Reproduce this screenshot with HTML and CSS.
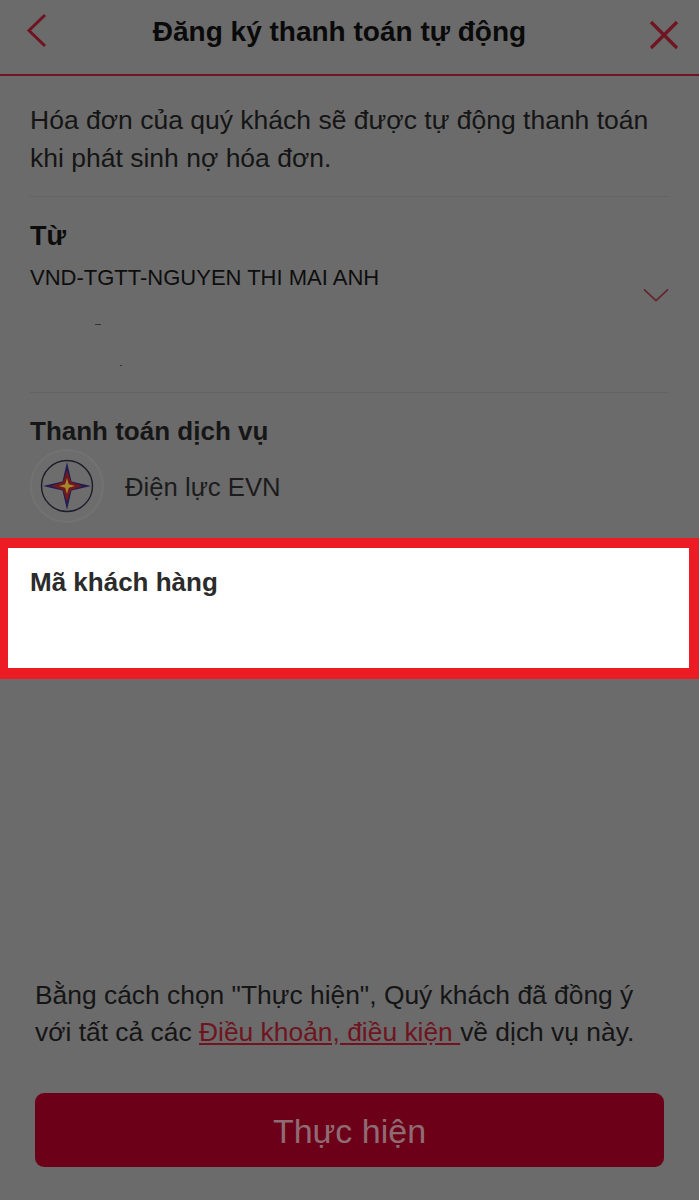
FILE: index.html
```html
<!DOCTYPE html>
<html lang="vi">
<head>
<meta charset="utf-8">
<title>Đăng ký thanh toán tự động</title>
<link rel="stylesheet" href="styles.css">
</head>
<body>
<div class="screen">
  <header class="topbar">
    <svg class="icon-back" viewBox="0 0 24 36" aria-hidden="true"><path d="M20 2 L4 17.5 L20 33"/></svg>
    <h1 class="title">Đăng ký thanh toán tự động</h1>
    <svg class="icon-close" viewBox="0 0 32 32" aria-hidden="true"><path d="M3 3 L29 29 M29 3 L3 29"/></svg>
  </header>
  <p class="intro">Hóa đơn của quý khách sẽ được tự động thanh toán khi phát sinh nợ hóa đơn.</p>
  <section class="from">
    <h2 class="label label-from">Từ</h2>
    <div class="account">VND-TGTT-NGUYEN THI MAI ANH</div>
    <svg class="icon-chevron" viewBox="0 0 28 16" aria-hidden="true"><path d="M1 1.5 L14 13.5 L27 1.5"/></svg>
    <span class="speck speck-a"></span>
    <span class="speck speck-b"></span>
  </section>
  <section class="service">
    <h2 class="label">Thanh toán dịch vụ</h2>
    <div class="provider">
      <span class="logo">
        <svg viewBox="0 0 54 54" aria-hidden="true">
          <circle cx="27" cy="27" r="25.5" fill="none" stroke="#1e1c28" stroke-width="1.4"/>
          <path d="M27 3 L31.5 22.5 L51 27 L31.5 31.5 L27 51 L22.5 31.5 L3 27 L22.5 22.5 Z" fill="#221c50"/>
          <path d="M27 11 L31 23 L43 27 L31 31 L27 43 L23 31 L11 27 L23 23 Z" fill="#701a20"/>
          <path d="M27 19 L28.8 25.2 L35 27 L28.8 28.8 L27 35 L25.2 28.8 L19 27 L25.2 25.2 Z" fill="#a8862a"/>
        </svg>
      </span>
      <span class="provider-name">Điện lực EVN</span>
    </div>
  </section>
  <section class="customer">
    <h2 class="label label-customer">Mã khách hàng</h2>
  </section>
  <footer class="bottom">
    <p class="terms">Bằng cách chọn "Thực hiện", Quý khách đã đồng ý với tất cả các <a class="terms-link" href="#">Điều khoản, điều kiện </a>về dịch vụ này.</p>
    <button class="submit" type="button">Thực hiện</button>
  </footer>
</div>
</body>
</html>
```

FILE: styles.css
```css
* { box-sizing: border-box; }
html, body { margin: 0; padding: 0; }
body { background: #6b6b6b; font-family: "Liberation Sans", Arial, sans-serif; color: #111; }
.screen { width: 699px; height: 1200px; display: flex; flex-direction: column; overflow: hidden; }
.topbar { height: 76px; flex: none; display: flex; align-items: center; justify-content: space-between; padding: 0 19px 12px 25px; border-bottom: 2px solid #6f1420; }
.title { margin: 2px 18px 0 0; font-size: 28px; font-weight: 700; color: #0a0a0a; }
.icon-back { width: 24px; height: 36px; fill: none; stroke: #6f1420; stroke-width: 3; }
.icon-close { width: 32px; height: 32px; fill: none; stroke: #6f1420; stroke-width: 3.2; margin-top: 8px; }
.intro { margin: 0 30px; padding: 25px 0 21px; font-size: 26.5px; line-height: 38px; color: #151515; border-bottom: 1px solid #636363; height: 121px; }
.from { position: relative; margin: 0 30px; height: 196px; padding-top: 21px; border-bottom: 1px solid #636363; }
.label { margin: 0; font-size: 26px; font-weight: 700; color: #161616; line-height: 36px; }
.label-from { font-size: 27px; color: #0c0c0c; }
.account { margin-top: 9px; font-size: 22px; line-height: 30px; color: #0e0e0e; }
.icon-chevron { position: absolute; right: 0; top: 91px; width: 26px; height: 15px; fill: none; stroke: #642530; stroke-width: 1.8; }
.speck { position: absolute; background: #333; height: 1px; }
.speck-a { left: 65px; top: 127px; width: 6px; }
.speck-b { left: 90px; top: 168px; width: 2px; }
.service { margin: 0 30px; height: 145px; padding-top: 20px; }
.provider { display: flex; align-items: center; gap: 21px; }
.logo { width: 74px; height: 74px; flex: none; border-radius: 50%; border: 2px solid #727272; display: flex; align-items: center; justify-content: center; background: #6d6d6d; }
.logo svg { width: 54px; height: 54px; display: block; }
.provider-name { font-size: 25.7px; color: #1c1c1c; padding-top: 3px; }
.customer { height: 141px; flex: none; background: #fff; border: solid #ed1c24; border-width: 10px 10px 11px 8px; padding: 16px 22px; }
.label-customer { color: #2b2b2b; }
.bottom { margin-top: auto; padding: 0 35px 33px; }
.terms { margin: 0; font-size: 26.4px; line-height: 37px; color: #151515; }
.terms-link { color: #6f1420; }
.submit { display: block; width: 629px; height: 74px; margin-top: 42px; padding-top: 4px; border: 0; border-radius: 9px; background: #6d0019; color: #8f6c74; font: 34px "Liberation Sans", Arial, sans-serif; }
```
